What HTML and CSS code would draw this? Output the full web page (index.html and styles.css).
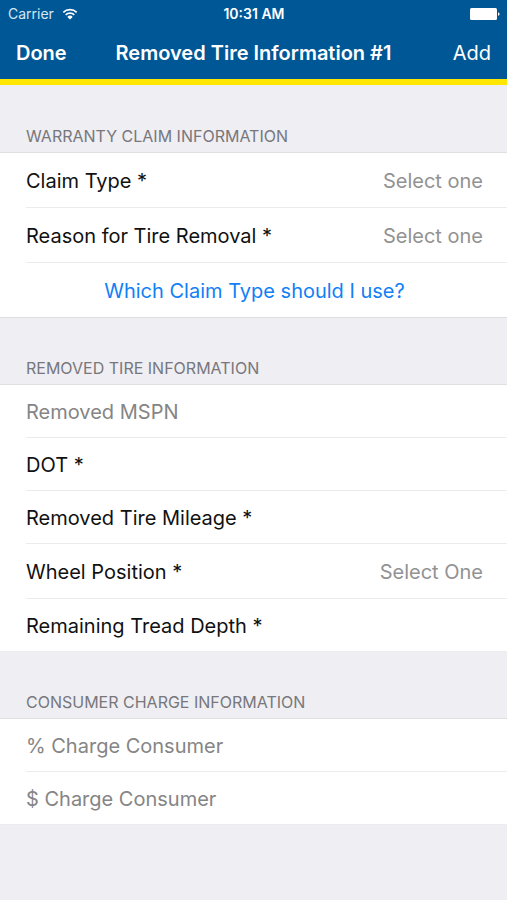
FILE: index.html
```html
<!DOCTYPE html>
<html lang="en">
<head>
<meta charset="utf-8">
<meta name="viewport" content="width=device-width, initial-scale=1">
<title>Removed Tire Information #1</title>
<link rel="stylesheet" href="styles.css">
</head>
<body>
<header class="top">
  <div class="status">
    <span class="carrier">Carrier
      <svg class="wifi" viewBox="0 0 16 12" aria-hidden="true">
        <path d="M1.3 4.4a9.6 9.6 0 0 1 13.4 0M3.7 6.9a6.2 6.2 0 0 1 8.6 0" fill="none" stroke="currentColor" stroke-width="1.7"/>
        <path d="M8 11.6 5.3 8.9a3.9 3.9 0 0 1 5.4 0z" fill="currentColor"/>
      </svg>
    </span>
    <span class="time">10:31 AM</span>
    <svg class="battery" viewBox="0 0 30 12" aria-hidden="true">
      <rect width="27" height="12" rx="1.5" fill="currentColor"/>
      <path d="M28 4.2q1.6.4 1.6 1.8T28 7.8z" fill="currentColor"/>
    </svg>
  </div>
  <nav class="bar">
    <button class="bar-button done" type="button">Done</button>
    <h1 class="title">Removed Tire Information #1</h1>
    <button class="bar-button add" type="button">Add</button>
  </nav>
</header>
<main class="form">
  <section>
    <h2 class="heading">Warranty Claim Information</h2>
    <div class="list">
      <div class="row tall">
        <label for="claim">Claim Type *</label>
        <select class="field choice" id="claim"><option>Select one</option></select>
      </div>
      <div class="row tall">
        <label for="reason">Reason for Tire Removal *</label>
        <select class="field choice" id="reason"><option>Select one</option></select>
      </div>
      <div class="row tall help"><a href="#claim">Which Claim Type should I use?</a></div>
    </div>
  </section>
  <section>
    <h2 class="heading">Removed Tire Information</h2>
    <div class="list">
      <div class="row"><input class="field" type="text" aria-label="Removed MSPN" placeholder="Removed MSPN"></div>
      <div class="row"><label for="dot">DOT *</label><input class="field" id="dot" type="text"></div>
      <div class="row"><label for="mileage">Removed Tire Mileage *</label><input class="field" id="mileage" type="text"></div>
      <div class="row tall">
        <label for="wheel">Wheel Position *</label>
        <select class="field choice" id="wheel"><option>Select One</option></select>
      </div>
      <div class="row"><label for="tread">Remaining Tread Depth *</label><input class="field" id="tread" type="text"></div>
    </div>
  </section>
  <section>
    <h2 class="heading">Consumer Charge Information</h2>
    <div class="list">
      <div class="row"><input class="field" type="text" aria-label="% Charge Consumer" placeholder="% Charge Consumer"></div>
      <div class="row"><input class="field" type="text" aria-label="$ Charge Consumer" placeholder="$ Charge Consumer"></div>
    </div>
  </section>
</main>
</body>
</html>
```
FILE: styles.css
```css
* {
  box-sizing: border-box;
}

body {
  margin: 0;
  background: #efeef3;
  color: #111;
  font-family: Inter, "Liberation Sans", sans-serif;
  font-size: 20px;
  line-height: 24px;
}

.top {
  background: #005796;
  border-bottom: 6px solid #ffe600;
  color: #fff;
}

.status,
.bar {
  display: grid;
  grid-template-columns: 1fr auto 1fr;
  align-items: center;
}

.status {
  height: 27px;
  padding: 0 7px 0 8px;
  font-size: 14px;
  line-height: 20px;
}

.carrier {
  display: flex;
  align-items: center;
  gap: 8px;
  color: #d5e8f5;
}

.wifi {
  width: 16px;
  height: 12px;
  color: #fff;
}

.time {
  font-weight: 600;
}

.battery {
  width: 30px;
  height: 12px;
  justify-self: end;
}

.bar {
  height: 52px;
  padding: 0 16px;
}

.title {
  margin: 0;
  font-size: 20px;
  font-weight: 600;
}

.bar-button {
  padding: 0;
  border: 0;
  background: none;
  color: inherit;
  font: inherit;
}

.done {
  justify-self: start;
  font-weight: 600;
}

.add {
  justify-self: end;
}

.form {
  padding-top: 1px;
}

.heading {
  margin: 0;
  padding: 40px 26px 6px;
  color: #77777c;
  font-size: 16px;
  font-weight: 400;
  line-height: 20px;
  text-transform: uppercase;
}

.list {
  background: #fff;
  border-top: 1px solid #dfdfe2;
}

.row {
  display: flex;
  align-items: center;
  height: 53px;
  margin-left: 26px;
  padding: 2px 24px 0 0;
  border-bottom: 1px solid #ececee;
}

.tall {
  height: 55px;
}

.row:last-child {
  margin-left: 0;
  padding-left: 26px;
}

.help {
  justify-content: center;
  border-color: #dfdfe2;
}

.help a {
  color: #117ff5;
  text-decoration: none;
}

.field {
  flex: 1;
  min-width: 0;
  padding: 0;
  border: 0;
  outline: 0;
  background: none;
  color: inherit;
  font: inherit;
}

.field::placeholder {
  color: #858585;
  opacity: 1;
}

.choice {
  appearance: none;
  color: #929292;
  text-align: right;
  text-align-last: right;
}
```
